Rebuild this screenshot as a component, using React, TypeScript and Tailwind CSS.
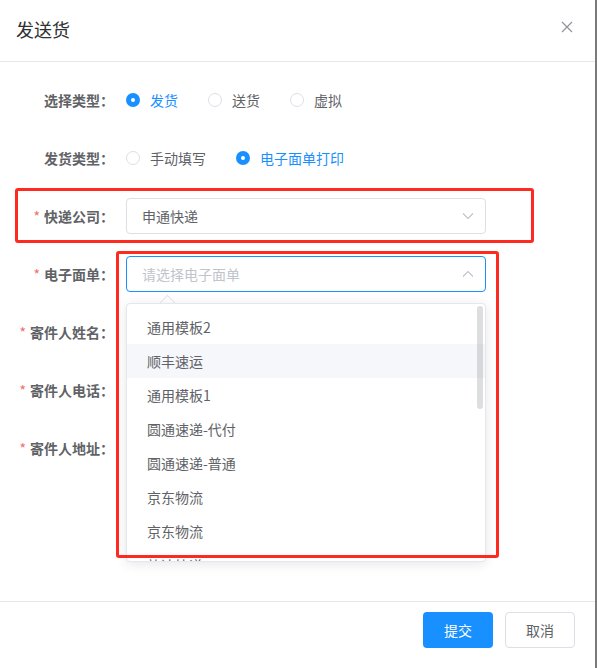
import React from 'react'

const font = { fontFamily: '"Noto Sans CJK SC", "Noto Sans", sans-serif' }

type RadioOpt = { label: string; checked?: boolean }

const Radio = ({ label, checked }: RadioOpt) => (
    <div className="flex items-center mr-[30px]">
        {checked ? (
            <span className="w-[14px] h-[14px] rounded-full bg-[#1890ff] flex items-center justify-center">
                <span className="w-[4px] h-[4px] rounded-full bg-white" />
            </span>
        ) : (
            <span className="w-[14px] h-[14px] rounded-full border border-[#dcdfe6] bg-white" />
        )}
        <span className={`pl-[10px] text-[14px] ${checked ? 'text-[#1890ff]' : 'text-[#606266]'}`}>{label}</span>
    </div>
)

const Chevron = ({ up }: { up?: boolean }) => (
    <svg width="14" height="14" viewBox="0 0 14 14" className="text-[#c0c4cc]">
        <path
            d={up ? 'M2 9.5 L7 4.5 L12 9.5' : 'M2 4.5 L7 9.5 L12 4.5'}
            fill="none"
            stroke="currentColor"
            strokeWidth="1.2"
        />
    </svg>
)

const FormRow = ({ label, required, children }: { label: string; required?: boolean; children?: React.ReactNode }) => (
    <div className="flex h-[36px] mb-[22px]">
        <div className="w-[126px] shrink-0 pr-3 flex items-center justify-end text-[14px] font-bold text-[#606266]">
            {required && <span className="text-[#f56c6c] mr-[4px] font-normal">*</span>}
            {label}
        </div>
        <div className="relative flex-1 flex items-center">{children}</div>
    </div>
)

const templates = ['通用模板2', '顺丰速运', '通用模板1', '圆通速递-代付', '圆通速递-普通', '京东物流', '京东物流', '韵达快递']

export default function App() {
    return (
        <div className="relative w-[597px] h-[668px] bg-white flex overflow-hidden" style={font}>
            <div className="w-[595px] h-full flex flex-col">
                {/* header */}
                <div className="flex items-start justify-between pl-4 pr-[22px] pt-[17px] pb-[20px] border-b border-[#e4e7ed]">
                    <div className="text-[18px] leading-[24px] text-[#303133]">发送货</div>
                    <svg width="12" height="12" viewBox="0 0 12 12" className="mt-[4px] text-[#909399]">
                        <path d="M1 1 L11 11 M11 1 L1 11" stroke="currentColor" strokeWidth="1.2" />
                    </svg>
                </div>

                {/* form body */}
                <div className="h-[540px] pt-5 border-b border-[#e4e7ed]">
                    <FormRow label="选择类型：">
                        <Radio label="发货" checked />
                        <Radio label="送货" />
                        <Radio label="虚拟" />
                    </FormRow>
                    <FormRow label="发货类型：">
                        <Radio label="手动填写" />
                        <Radio label="电子面单打印" checked />
                    </FormRow>
                    <FormRow label="快递公司：" required>
                        <div className="w-[360px] h-[36px] border border-[#dcdfe6] rounded-[4px] pl-[15px] pr-[10px] flex items-center justify-between">
                            <span className="text-[14px] text-[#606266]">申通快递</span>
                            <Chevron />
                        </div>
                    </FormRow>
                    <FormRow label="电子面单：" required>
                        <div className="w-[360px] h-[36px] border border-[#1890ff] rounded-[4px] pl-[15px] pr-[10px] flex items-center justify-between">
                            <span className="text-[14px] text-[#c0c4cc]">请选择电子面单</span>
                            <Chevron up />
                        </div>
                        {/* dropdown panel */}
                        <div className="absolute left-0 top-[47px] z-10 w-[360px]">
                            <div className="absolute left-[36px] -top-[6px] w-[11px] h-[11px] rotate-45 bg-white border-l border-t border-[#e4e7ed]" />
                            <div className="relative h-[259px] bg-white border border-[#e4e7ed] rounded-[4px] shadow-[0_2px_12px_rgba(0,0,0,0.1)] overflow-hidden">
                                <div className="py-[6px]">
                                    {templates.map((t, i) => (
                                        <div
                                            key={i}
                                            className={`h-[34px] pl-5 flex items-center text-[14px] text-[#606266] ${i === 1 ? 'bg-[#f5f7fa]' : ''}`}
                                        >
                                            {t}
                                        </div>
                                    ))}
                                </div>
                                <div className="absolute right-[2px] top-[2px] w-[6px] h-[103px] rounded-[3px] bg-[#909399]/30" />
                            </div>
                        </div>
                    </FormRow>
                    <FormRow label="寄件人姓名：" required />
                    <FormRow label="寄件人电话：" required />
                    <FormRow label="寄件人地址：" required />
                </div>

                {/* footer */}
                <div className="flex justify-end gap-3 pt-[10px] pr-5">
                    <button className="w-[70px] h-[36px] rounded-[4px] bg-[#1890ff] text-white text-[14px]">提交</button>
                    <button className="w-[70px] h-[36px] rounded-[4px] border border-[#dcdfe6] bg-white text-[#606266] text-[14px]">取消</button>
                </div>
            </div>
            <div className="w-[2px] h-full bg-[#7b7b7b]" />

            {/* highlight frames */}
            <div className="absolute left-[15px] top-[188px] w-[519px] h-[55px] border-[3px] border-[#ff2a1f] rounded-[3px] z-20" />
            <div className="absolute left-[116px] top-[251px] w-[383px] h-[307px] border-[3px] border-[#ff2a1f] rounded-[3px] z-20" />
        </div>
    )
}
